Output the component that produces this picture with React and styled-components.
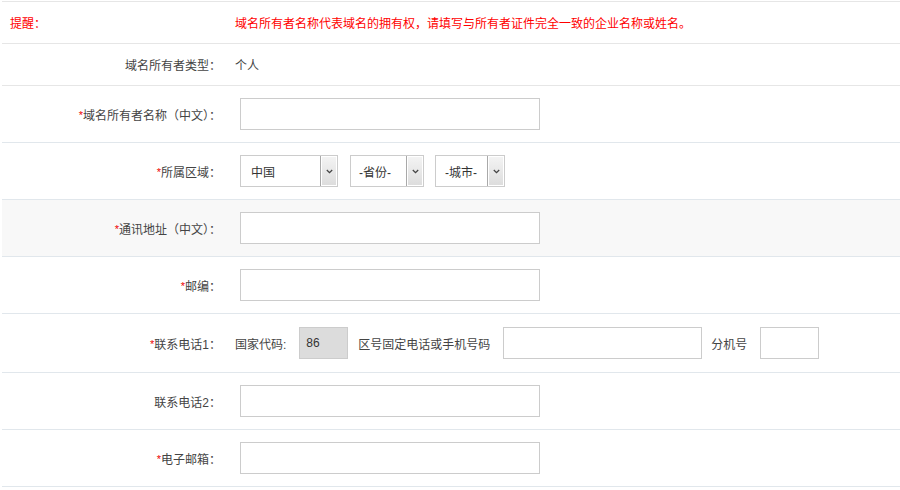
import React from 'react';
import styled, { createGlobalStyle } from 'styled-components';

const GlobalStyle = createGlobalStyle`
  html, body {
    margin: 0;
    padding: 0;
    background: #fff;
  }
  body {
    font-family: "Liberation Sans", "Noto Sans CJK SC", sans-serif;
    font-size: 12px;
    color: #333;
  }
`;

const Form = styled.div`
  margin: 1px 0 0 2px;
  border-top: 1px solid #e6e6e6;
`;

const Row = styled.div`
  display: grid;
  grid-template-columns: 233px 1fr;
  align-items: center;
  min-height: ${(p) => p.$height || 56}px;
  border-bottom: 1px solid ${(p) => (p.$blue ? '#e1e7ec' : '#e6e6e6')};
  background: ${(p) => (p.$shade ? '#f8f8f8' : '#fff')};
`;

const Label = styled.div`
  text-align: right;
  padding-right: 14px;
  color: #444;
  white-space: nowrap;
`;

const Notice = styled.div`
  color: #f00;
  padding-left: 8px;
`;

const NoticeText = styled.div`
  color: #f00;
`;

const Star = styled.span`
  color: #e00;
  font-size: 11px;
  vertical-align: 1px;
`;

const Content = styled.div`
  display: flex;
  align-items: center;
`;

const Text = styled.span`
  color: #444;
  margin-right: ${(p) => p.$mr || 0}px;
  white-space: nowrap;
`;

const Input = styled.input`
  box-sizing: border-box;
  width: ${(p) => p.$w || 300}px;
  height: 32px;
  margin-left: ${(p) => (p.$ml === undefined ? 5 : p.$ml)}px;
  margin-right: ${(p) => p.$mr || 0}px;
  border: 1px solid #ccc;
  background: ${(p) => (p.$gray ? '#dcdcdc' : '#fff')};
  padding: 0 6px;
  font: inherit;
  color: #333;
  outline: none;
`;

const Select = styled.div`
  box-sizing: border-box;
  display: flex;
  align-items: stretch;
  width: ${(p) => p.$w}px;
  height: 32px;
  margin-left: ${(p) => p.$ml}px;
  border: 1px solid #ccc;
  background: #fff;
`;

const SelectValue = styled.span`
  flex: 1;
  display: flex;
  align-items: center;
  padding-left: ${(p) => p.$pl || 10}px;
  color: #333;
`;

const Arrow = styled.span`
  width: 16px;
  display: flex;
  align-items: center;
  justify-content: center;
  border-left: 1px solid #a9a9a9;
  background: linear-gradient(#f4f4f4, #dcdcdc);
  box-shadow: inset 0 0 0 1px #fff;
  svg {
    width: 7px;
    height: 5px;
  }
`;

const Chevron = () => (
  <svg viewBox="0 0 7 5">
    <path d="M0.8 1 L3.5 3.7 L6.2 1" fill="none" stroke="#444" strokeWidth="1.3" />
  </svg>
);

const Dropdown = ({ value, w, ml, pl }) => (
  <Select $w={w} $ml={ml}>
    <SelectValue $pl={pl}>{value}</SelectValue>
    <Arrow>
      <Chevron />
    </Arrow>
  </Select>
);

const App = () => (
  <>
    <GlobalStyle />
    <Form>
      <Row $height={41}>
        <Notice>提醒：</Notice>
        <NoticeText>域名所有者名称代表域名的拥有权，请填写与所有者证件完全一致的企业名称或姓名。</NoticeText>
      </Row>
      <Row $height={41}>
        <Label>域名所有者类型：</Label>
        <Text>个人</Text>
      </Row>
      <Row $blue>
        <Label><Star>*</Star>域名所有者名称（中文）：</Label>
        <Content><Input /></Content>
      </Row>
      <Row $blue>
        <Label><Star>*</Star>所属区域：</Label>
        <Content>
          <Dropdown value="中国" w={98} ml={5} pl={10} />
          <Dropdown value="-省份-" w={74} ml={12} pl={8} />
          <Dropdown value="-城市-" w={70} ml={11} pl={9} />
        </Content>
      </Row>
      <Row $shade $blue>
        <Label><Star>*</Star>通讯地址（中文）：</Label>
        <Content><Input /></Content>
      </Row>
      <Row $blue>
        <Label><Star>*</Star>邮编：</Label>
        <Content><Input /></Content>
      </Row>
      <Row $blue $height={58}>
        <Label><Star>*</Star>联系电话1：</Label>
        <Content>
          <Text>国家代码:</Text>
          <Input $gray $w={49} $ml={13} $mr={10} defaultValue="86" />
          <Text>区号固定电话或手机号码</Text>
          <Input $w={199} $ml={13} $mr={9} />
          <Text>分机号</Text>
          <Input $w={59} $ml={13} />
        </Content>
      </Row>
      <Row $blue>
        <Label>联系电话2：</Label>
        <Content><Input /></Content>
      </Row>
      <Row $blue>
        <Label><Star>*</Star>电子邮箱：</Label>
        <Content><Input /></Content>
      </Row>
    </Form>
  </>
);

export default App;
